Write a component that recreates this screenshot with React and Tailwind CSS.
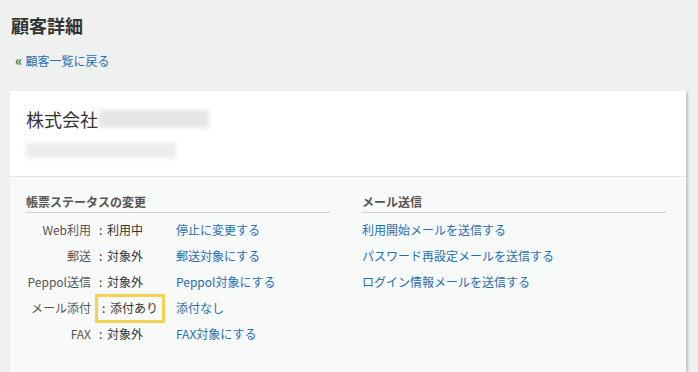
import React from 'react';

const statusRows = [
    { label: 'Web利用', value: '利用中', action: '停止に変更する' },
    { label: '郵送', value: '対象外', action: '郵送対象にする' },
    { label: 'Peppol送信', value: '対象外', action: 'Peppol対象にする' },
    { label: 'メール添付', value: '添付あり', action: '添付なし', highlight: true },
    { label: 'FAX', value: '対象外', action: 'FAX対象にする' },
];

const mailLinks = [
    '利用開始メールを送信する',
    'パスワード再設定メールを送信する',
    'ログイン情報メールを送信する',
];

const SectionHeading = ({ children }) => (
    <h3 className="text-[12px] font-bold text-[#555] leading-[16px] pb-[2px] border-b border-[#cfd1d1]">
        {children}
    </h3>
);

export default function App() {
    return (
        <div
            className="min-h-[372px] bg-[#eff0f0] pl-[10px] pr-[12px] pt-[13px] overflow-hidden"
            style={{ fontFamily: '"Noto Sans CJK JP", "Noto Sans", sans-serif' }}
        >
            <h1 className="text-[18px] font-bold text-[#333] leading-[24px] pl-[1px]">顧客詳細</h1>

            <a href="#" className="flex items-center gap-[3px] mt-[15px] pl-[5px] text-[12px] leading-[18px] text-[#1f6fb2]">
                <span className="text-[#2e7d32] text-[14px] font-bold leading-none -mt-[2px]">«</span>
                顧客一覧に戻る
            </a>

            <div className="mt-[21px] bg-white shadow-[2px_1px_2px_rgba(0,0,0,0.18)]">
                <div className="px-[16px] pt-[16px] pb-[18px] border-b border-[#e3e5e5]">
                    <div className="flex items-center">
                        <span className="text-[18px] text-[#333] leading-[24px]">株式会社</span>
                        <span className="ml-[1px] h-[18px] w-[110px] bg-[#e6e6e6] blur-[2px]" />
                    </div>
                    <div className="mt-[12px] h-[15px] w-[150px] bg-[#ececec] blur-[2px]" />
                </div>

                <div className="bg-[#f8f9f9] px-[16px] pt-[17px] pb-[40px] grid grid-cols-2 gap-[32px] pr-[20px]">
                    <div>
                        <SectionHeading>帳票ステータスの変更</SectionHeading>
                        <div className="mt-[4px] flex flex-col">
                            {statusRows.map((row) => (
                                <div key={row.label} className="flex items-center h-[26px] text-[12px]">
                                    <span className="w-[65px] text-right text-[#555]">{row.label}</span>
                                    <span
                                        className={
                                            row.highlight
                                                ? 'ml-[4px] w-[70px] h-[29px] flex items-center pl-[4px] border-[3px] border-[#f7d24f] text-[#333]'
                                                : 'ml-[4px] w-[70px] flex items-center pl-[4px] text-[#333]'
                                        }
                                    >
                                        <span className="w-[8px]">:</span>
                                        {row.value}
                                    </span>
                                    <a href="#" className="ml-[11px] text-[#1f6fb2]">{row.action}</a>
                                </div>
                            ))}
                        </div>
                    </div>
                    <div>
                        <SectionHeading>メール送信</SectionHeading>
                        <div className="mt-[4px] flex flex-col">
                            {mailLinks.map((link) => (
                                <a key={link} href="#" className="h-[26px] flex items-center text-[12px] text-[#1f6fb2]">
                                    {link}
                                </a>
                            ))}
                        </div>
                    </div>
                </div>
            </div>
        </div>
    );
}
